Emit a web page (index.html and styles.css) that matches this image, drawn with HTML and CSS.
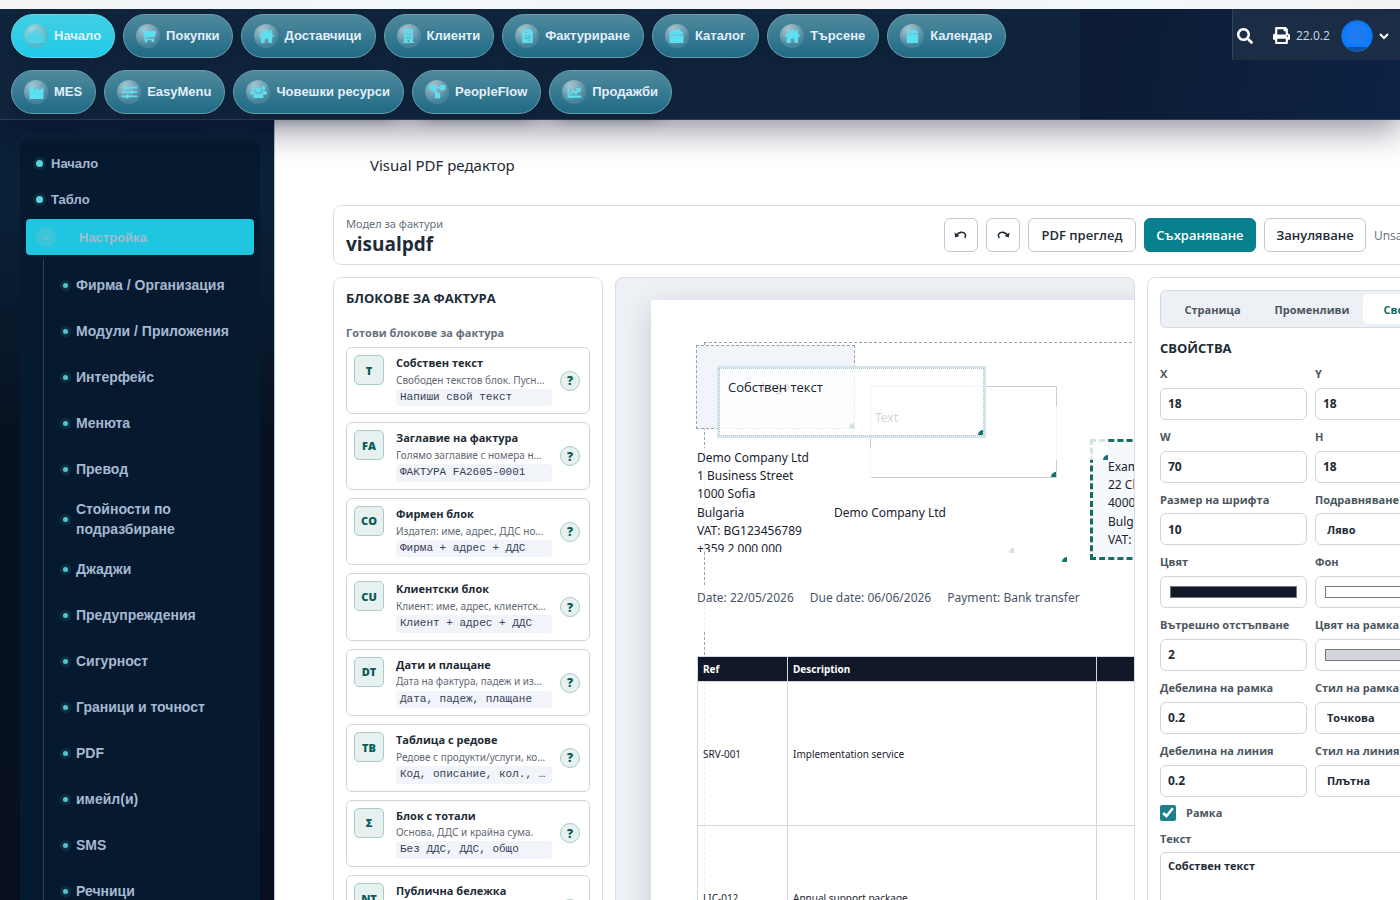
FILE: index.html
```html
<!DOCTYPE html>
<html lang="bg">
<head>
<meta charset="utf-8">
<title>Visual PDF редактор</title>
<link rel="stylesheet" href="styles.css">
</head>
<body>
<svg class="sprite" aria-hidden="true">
  <symbol id="i-city" viewBox="0 0 20 16"><path fill-rule="evenodd" d="M0 5h2V3h1v2h3V1h7v6h6v9H0zM2 7v1h1V7zm0 3v1h1v-1zm0 3v1h1v-1zm3-6v1h1V7zm0 3v1h1v-1zm0 3v1h1v-1zm4-10v1h2V3zm0 3v1h2V6zm0 3v1h2V9zm0 3v1h2v-1zm6-3v1h1V9zm0 3v1h1v-1z"/></symbol>
  <symbol id="i-cart" viewBox="0 0 18 16"><path d="M0 0h3.500L4 2h14l-1.700 7.500H6l.3 1.500h9.600l-.4 1.600a1.700 1.700 0 1 1-2.700 0H7.600a1.700 1.700 0 1 1-2.800-.1L2.300 1.500H0z"/></symbol>
  <symbol id="i-home" viewBox="0 0 18 16"><path d="M9 0l4 3.500V1h2.200v4.400L18 8l-1 1.200-1.500-1.300V16H11v-5H7v5H2.500V7.900L1 9.200 0 8z"/></symbol>
  <symbol id="i-building" viewBox="0 0 16 16"><path fill-rule="evenodd" d="M3 0h10v14.500h1.500V16h-13v-1.500H3zM5.500 2v2h2V2zm3 0v2h2V2zm-3 3.500v2h2v-2zm3 0v2h2v-2zM5.500 9v2h2V9zm3 0v2h2V9zM7 12.500V15h2v-2.500z"/></symbol>
  <symbol id="i-invoice" viewBox="0 0 16 16"><path fill-rule="evenodd" d="M2 2h3V0h6l3 3v13H2zm3 2v1h3V4zm0 3v4h6V7zm1 1h4v2H6zm3 5v1h3v-1z"/></symbol>
  <symbol id="i-box" viewBox="0 0 16 16"><path d="M2 3l9-3 2.500 3H15l1 3.500H0L1 3zM0 7.500h16V16H0z"/></symbol>
  <symbol id="i-calendar" viewBox="0 0 16 16"><path d="M1.500 2.500H4V1h2v1.500L12 0l.5 2.500h2V5h-13zM1.500 6h13v10h-13z"/></symbol>
  <symbol id="i-factory" viewBox="0 0 16 16"><path d="M0 1h5v5l5-3v3l6-3v13H0z"/></symbol>
  <symbol id="i-sliders" viewBox="0 0 18 16"><path d="M0 2h3V1h3v1h12v2H6v1H3V4H0zm0 5h10V6h3v1h5v2h-5v1h-3V9H0zm0 5h5v-1h3v1h10v2H8v1H5v-1H0z"/></symbol>
  <symbol id="i-users" viewBox="0 0 20 16"><path d="M10 2.500a3 3 0 1 1 0 6 3 3 0 0 1 0-6zM4 1a2 2 0 1 1 0 4.500A2 2 0 0 1 4 1zm12 0a2 2 0 1 1 0 4.500A2 2 0 0 1 16 1zM0 10c0-2 1-3.500 3-3.500h2.500C6 8.500 6 9 7 9.500L4.500 11H0zm20 0c0-2-1-3.500-3-3.500h-2.500c-.5 2-.5 2.500-1.500 3l2.500 1.500H20zM4 15c0-4 1.500-5 4-5h4c2.500 0 4 1 4 5z"/></symbol>
  <symbol id="i-flow" viewBox="0 0 18 16"><path d="M0 0h6v2h6V0h6v6h-6V4H6.500l2.800 5H12v6H6V9.500L3.500 6H0z"/></symbol>
  <symbol id="i-chart" viewBox="0 0 16 16"><path d="M0 1h2v11h14v2.500H0zM3 9l3.500-4 2.500 2 2-2-1.500-1.500H15V9l-1.500-1.500L9.500 11l-3-2.500L4 11H3z"/></symbol>
</svg>

<div class="strip"></div>
<header class="header">
  <nav class="nav" aria-label="Модули">
    <a href="#" class="pill active"><span class="orb"><svg><use href="#i-city"/></svg></span>Начало</a>
    <a href="#" class="pill"><span class="orb"><svg><use href="#i-cart"/></svg></span>Покупки</a>
    <a href="#" class="pill"><span class="orb"><svg><use href="#i-home"/></svg></span>Доставчици</a>
    <a href="#" class="pill"><span class="orb"><svg><use href="#i-building"/></svg></span>Клиенти</a>
    <a href="#" class="pill"><span class="orb"><svg><use href="#i-invoice"/></svg></span>Фактуриране</a>
    <a href="#" class="pill"><span class="orb"><svg><use href="#i-box"/></svg></span>Каталог</a>
    <a href="#" class="pill"><span class="orb"><svg><use href="#i-home"/></svg></span>Търсене</a>
    <a href="#" class="pill"><span class="orb"><svg><use href="#i-calendar"/></svg></span>Календар</a>
    <a href="#" class="pill"><span class="orb"><svg><use href="#i-factory"/></svg></span>MES</a>
    <a href="#" class="pill"><span class="orb"><svg><use href="#i-sliders"/></svg></span>EasyMenu</a>
    <a href="#" class="pill"><span class="orb"><svg><use href="#i-users"/></svg></span>Човешки ресурси</a>
    <a href="#" class="pill"><span class="orb"><svg><use href="#i-flow"/></svg></span>PeopleFlow</a>
    <a href="#" class="pill"><span class="orb"><svg><use href="#i-chart"/></svg></span>Продажби</a>
  </nav>
  <div class="header-side">
    <div class="user">
      <button class="icon-btn" aria-label="Търсене"><svg width="16" height="16" viewBox="0 0 512 512" fill="currentColor"><path d="M505 442.700L405.300 343c-4.500-4.500-10.600-7-17-7H372c27.600-35.300 44-79.700 44-128C416 93.100 322.900 0 208 0S0 93.100 0 208s93.100 208 208 208c48.300 0 92.700-16.400 128-44v16.300c0 6.400 2.500 12.500 7 17l99.700 99.700c9.400 9.400 24.600 9.400 33.900 0l28.300-28.300c9.400-9.400 9.400-24.600.1-34zM208 336c-70.700 0-128-57.200-128-128 0-70.700 57.200-128 128-128 70.700 0 128 57.200 128 128 0 70.700-57.200 128-128 128z"/></svg></button>
      <button class="icon-btn print" aria-label="Печат"><svg width="17" height="17" viewBox="0 0 512 512" fill="currentColor"><path d="M448 192V77.300c0-8.500-3.400-16.600-9.400-22.600L393.400 9.400c-6-6-14.100-9.400-22.600-9.400H96C78.300 0 64 14.300 64 32v160c-35.300 0-64 28.700-64 64v112c0 8.800 7.200 16 16 16h48v96c0 17.700 14.300 32 32 32h320c17.700 0 32-14.300 32-32v-96h48c8.800 0 16-7.200 16-16V256c0-35.300-28.700-64-64-64zm-64 256H128v-96h256v96zm0-224H128V64h192v48c0 8.800 7.200 16 16 16h48v96zm48 72c-13.300 0-24-10.700-24-24s10.700-24 24-24 24 10.700 24 24-10.700 24-24 24z"/></svg></button>
      <span class="version">22.0.2</span>
      <button class="account" aria-label="Профил"><span class="avatar"></span><svg width="10" height="8" viewBox="0 0 10 8" fill="none" stroke="currentColor" stroke-width="2"><path d="M1 2l4 4 4-4"/></svg></button>
    </div>
  </div>
</header>

<div class="body">
  <aside class="sidebar">
    <nav class="menu" aria-label="Меню">
      <a href="#" class="top">Начало</a>
      <a href="#" class="top">Табло</a>
      <a href="#" class="current"><span class="toggle">–</span>Настройка</a>
      <div class="sub">
        <a href="#">Фирма / Организация</a>
        <a href="#">Модули / Приложения</a>
        <a href="#">Интерфейс</a>
        <a href="#">Менюта</a>
        <a href="#">Превод</a>
        <a href="#">Стойности по подразбиране</a>
        <a href="#">Джаджи</a>
        <a href="#">Предупреждения</a>
        <a href="#">Сигурност</a>
        <a href="#">Граници и точност</a>
        <a href="#">PDF</a>
        <a href="#">имейл(и)</a>
        <a href="#">SMS</a>
        <a href="#">Речници</a>
      </div>
    </nav>
  </aside>

  <main class="main">
    <h1>Visual PDF редактор</h1>
    <div class="editor">
      <section class="toolbar">
        <div class="model"><span>Модел за фактури</span><strong>visualpdf</strong></div>
        <div class="actions">
          <button class="btn square" aria-label="Назад"><svg width="16" height="12" viewBox="0 0 16 12"><path d="M3.500 6.500C5 3 11 2 12.500 5.500c.5 1.500 0 2.500-.8 3.500" fill="none" stroke="currentColor" stroke-width="1.600"/><path d="M1.500 3.500l.7 5 4.300-1.500z" fill="currentColor"/></svg></button>
          <button class="btn square" aria-label="Напред"><svg width="16" height="12" viewBox="0 0 16 12"><path d="M12.500 6.500C11 3 5 2 3.500 5.500c-.5 1.500 0 2.500.8 3.500" fill="none" stroke="currentColor" stroke-width="1.600"/><path d="M14.500 3.500l-.7 5L9.500 7z" fill="currentColor"/></svg></button>
          <button class="btn preview">PDF преглед</button>
          <button class="btn primary">Съхраняване</button>
          <button class="btn reset">Зануляване</button>
          <span class="status">Unsaved changes</span>
        </div>
      </section>

      <section class="panel blocks">
        <h2>БЛОКОВЕ ЗА ФАКТУРА</h2>
        <h3>Готови блокове за фактура</h3>
        <div class="cards">
          <article class="card"><span class="tag">T</span><div class="info"><b>Собствен текст</b><span>Свободен текстов блок. Пуснете го на страницата</span><code>Напиши свой текст</code></div><button class="help">?</button></article>
          <article class="card"><span class="tag">FA</span><div class="info"><b>Заглавие на фактура</b><span>Голямо заглавие с номера на фактурата</span><code>ФАКТУРА FA2605-0001</code></div><button class="help">?</button></article>
          <article class="card"><span class="tag">CO</span><div class="info"><b>Фирмен блок</b><span>Издател: име, адрес, ДДС номер и телефон</span><code>Фирма + адрес + ДДС</code></div><button class="help">?</button></article>
          <article class="card"><span class="tag">CU</span><div class="info"><b>Клиентски блок</b><span>Клиент: име, адрес, клиентски номер</span><code>Клиент + адрес + ДДС</code></div><button class="help">?</button></article>
          <article class="card"><span class="tag">DT</span><div class="info"><b>Дати и плащане</b><span>Дата на фактура, падеж и избрано плащане</span><code>Дата, падеж, плащане</code></div><button class="help">?</button></article>
          <article class="card"><span class="tag">TB</span><div class="info"><b>Таблица с редове</b><span>Редове с продукти/услуги, количества и цени</span><code>Код, описание, кол., цена</code></div><button class="help">?</button></article>
          <article class="card"><span class="tag">Σ</span><div class="info"><b>Блок с тотали</b><span>Основа, ДДС и крайна сума.</span><code>Без ДДС, ДДС, общо</code></div><button class="help">?</button></article>
          <article class="card"><span class="tag">NT</span><div class="info"><b>Публична бележка</b><span>Бележка към клиента.</span><code>Публична бележка</code></div><button class="help">?</button></article>
        </div>
      </section>

      <section class="stage">
        <div class="sheet">
          <div class="guide"></div>
          <div class="node logo">Logo<i></i></div>
          <div class="node textbox">Text<i></i></div>
          <div class="node customer">Example Client Ltd<br>22 Client Road<br>4000 Plovdiv<br>Bulgaria<br>VAT: BG987654321</div>
          <div class="node blank"><i></i></div>
          <div class="node company">Demo Company Ltd<br>1 Business Street<br>1000 Sofia<br>Bulgaria<br>VAT: BG123456789<br>+359 2 000 000</div>
          <div class="node name">Demo Company Ltd<i></i></div>
          <div class="node cover"><i></i></div>
          <div class="node own">Собствен текст<i></i></div>
          <div class="node dates"><span>Date: 22/05/2026</span><span>Due date: 06/06/2026</span><span>Payment: Bank transfer</span></div>
          <table class="node lines">
            <thead><tr><th class="c-ref">Ref</th><th class="c-desc">Description</th><th></th></tr></thead>
            <tbody>
              <tr><td>SRV-001</td><td>Implementation service</td><td></td></tr>
              <tr><td>LIC-012</td><td>Annual support package</td><td></td></tr>
            </tbody>
          </table>
        </div>
      </section>

      <section class="panel props">
        <div class="tabs"><button>Страница</button><button>Променливи</button><button class="on">Свойства</button></div>
        <h2>СВОЙСТВА</h2>
        <form class="fields">
          <label>X<input type="text" value="18"></label>
          <label>Y<input type="text" value="18"></label>
          <label>W<input type="text" value="70"></label>
          <label>H<input type="text" value="18"></label>
          <label>Размер на шрифта<input type="text" value="10"></label>
          <label>Подравняване<select><option>Ляво</option></select></label>
          <label>Цвят<input type="color" value="#111827"></label>
          <label>Фон<input type="color" value="#ffffff"></label>
          <label>Вътрешно отстъпване<input type="text" value="2"></label>
          <label>Цвят на рамка<input type="color" value="#d1d5db"></label>
          <label>Дебелина на рамка<input type="text" value="0.2"></label>
          <label>Стил на рамка<select><option>Точкова</option></select></label>
          <label>Дебелина на линия<input type="text" value="0.2"></label>
          <label>Стил на линия<select><option>Плътна</option></select></label>
          <label class="check"><input type="checkbox" checked>Рамка</label>
          <label class="wide">Текст<textarea rows="5">Собствен текст</textarea></label>
        </form>
      </section>
    </div>
  </main>
</div>
</body>
</html>
```

FILE: styles.css
```css
* { box-sizing: border-box; }
body {
  margin: 0;
  height: 100vh;
  overflow: hidden;
  display: flex;
  flex-direction: column;
  font-family: "Open Sans", "Noto Sans", sans-serif;
  color: #212b36;
  background: #fff;
}
a { color: inherit; text-decoration: none; }
button, input, select, textarea { font: inherit; color: inherit; }
button { cursor: pointer; }
.sprite { display: none; }

/* Header */
.strip { position: relative; z-index: 3; flex: none; height: 9px; background: linear-gradient(90deg, #f3f4f4, #f1f8fc 30%, #f4f4f6 60%, #f1f8fc 80%, #f3f3f4); }
.header {
  position: relative;
  z-index: 2;
  flex: none;
  display: flex;
  background: #10253c;
  border-bottom: 1px solid #2a3d52;
  box-shadow: 0 10px 32px rgba(16, 14, 40, .45);
  font-family: "Liberation Sans", Arial, sans-serif;
}
.nav { flex: 1; display: flex; flex-wrap: wrap; gap: 12px 8px; padding: 5px 11px; }
.pill {
  display: flex;
  align-items: center;
  gap: 6px;
  height: 44px;
  padding: 0 13px 2px 12px;
  border: 1px solid #6b9fb0;
  border-radius: 22px;
  background: linear-gradient(#4f8a9d, #206a86);
  box-shadow: 0 6px 12px rgba(8, 20, 40, .3);
  color: #e2effa;
  font-size: 13px;
  font-weight: 700;
  white-space: nowrap;
}
.pill.active { background: linear-gradient(#42cfe4, #1fcbe8); border-color: #5cdcec; }
.orb {
  display: grid;
  place-items: center;
  width: 24px;
  height: 24px;
  margin-top: 2px;
  border-radius: 50%;
  background: radial-gradient(circle at 35% 25%, rgba(255, 255, 255, .55), rgba(255, 255, 255, .12) 65%);
}
.orb svg { width: 17px; height: 14px; fill: #5cdff0; }
.active .orb { background: radial-gradient(circle at 35% 25%, #a5d4de, #52b9cb 65%); }
.active .orb svg { fill: #4ad6e9; width: 19px; }
.header-side { flex: none; width: 320px; display: flex; justify-content: flex-end; align-items: flex-start; background: linear-gradient(100deg, #0c1b33, #0d2344); }
.user {
  display: flex;
  align-items: center;
  width: 168px;
  height: 51px;
  padding: 2px 0 0 4px;
  border-left: 1px solid #33445b;
  background: #1b2d45;
  color: #fff;
}
.icon-btn, .account { display: flex; align-items: center; padding: 0; border: 0; background: none; color: #fff; }
.print { margin-left: 20px; }
.version { margin: 0 11px 0 6px; font: 12px "Open Sans", sans-serif; color: #cdd8e6; }
.account { gap: 6px; }
.avatar { width: 32px; height: 32px; border: 1px solid #1c67b8; border-radius: 50%; background: linear-gradient(transparent 26px, #0f4fa8 26px), radial-gradient(circle at 50% 45%, #1d7bf2 10px, #0b7cff 11px); }

.body { flex: 1; display: flex; min-height: 0; }

/* Sidebar */
.sidebar {
  flex: none;
  width: 275px;
  padding: 21px 14px 0 20px;
  overflow: hidden;
  border-right: 1px solid #b8c2cf;
  background: linear-gradient(#0a2138, #0a2138 80px, #071120 320px, #08101f);
  font-family: "Liberation Sans", Arial, sans-serif;
  font-weight: 700;
  color: #a6b8d2;
}
.menu { padding: 4px 6px; border-radius: 6px; background: #051a2e; font-size: 14px; }
.menu a { display: flex; align-items: center; }
.menu .top { height: 36px; padding-left: 10px; gap: 8px; font-size: 13px; }
.top::before { content: ""; width: 7px; height: 7px; border-radius: 50%; background: #5cd3e0; box-shadow: 0 0 0 3px rgba(92, 211, 224, .1); }
.menu .current { height: 36px; margin-top: 2px; padding-left: 10px; gap: 23px; border-radius: 4px; background: #20c6e0; color: #a0bccf; font-size: 13px; }
.toggle { display: grid; place-items: center; width: 20px; height: 20px; border-radius: 50%; background: #3cc4d8; font-size: 8px; }
.sub { margin: 4px 0 0 17px; padding-top: 3px; border-left: 1px solid #2b4054; }
.sub a { min-height: 46px; padding: 7px 10px 7px 19px; gap: 8px; line-height: 20px; }
.sub a::before { content: ""; flex: none; width: 5px; height: 5px; border-radius: 50%; background: #55c3cf; box-shadow: 0 0 0 3px rgba(85, 195, 207, .12); }

/* Main */
.main { flex: 1; min-width: 0; overflow: hidden; padding: 34px 0 0 58px; }
h1 { margin: 0 0 28px 37px; font-family: "Noto Sans", sans-serif; font-size: 15px; font-weight: 400; line-height: 23px; }
.editor { display: grid; grid-template-columns: 270px minmax(520px, 1fr) 328px; gap: 12px; }
.toolbar { grid-column: 1 / -1; display: flex; justify-content: space-between; align-items: center; height: 60px; padding: 0 12px; border: 1px solid #dbdfe5; border-radius: 8px; }
.model { display: flex; flex-direction: column; padding-top: 2px; }
.model span { font: 11px/16px "Noto Sans", sans-serif; color: #66707c; }
.model strong { font-size: 19px; line-height: 24px; }
.actions { display: flex; align-items: center; gap: 8px; }
.btn { height: 34px; padding: 0; border: 1px solid #c3c8cf; border-radius: 6px; background: #fff; font-size: 13px; font-weight: 600; white-space: nowrap; }
.square { width: 34px; display: grid; place-items: center; }
.preview { width: 108px; }
.primary { width: 112px; background: #087f8c; border-color: #087f8c; color: #fff; }
.reset { width: 102px; }
.status { width: 88px; font-size: 12px; color: #5f6b78; white-space: nowrap; }

.panel { padding: 12px; border: 1px solid #dbdfe5; border-radius: 8px; background: #fff; }
h2 { margin: 0; font-size: 13px; font-weight: 700; line-height: 16px; }
h3 { margin: 18px 0 6px; font-size: 11px; font-weight: 700; line-height: 17px; color: #66707c; }
.cards { display: flex; flex-direction: column; gap: 8px; }
.card { display: flex; gap: 12px; padding: 7px; border: 1px solid #cfd5dd; border-radius: 6px; }
.tag { flex: none; display: grid; place-items: center; width: 30px; height: 30px; border: 1px solid #a9cbc8; border-radius: 5px; background: #e6f1f0; color: #0b5c58; font-size: 11px; font-weight: 800; }
.info { flex: 1; min-width: 0; display: flex; flex-direction: column; gap: 2px; }
.info b { font-size: 11px; line-height: 1.42; font-weight: 700; }
.info span, .info code { overflow: hidden; white-space: nowrap; text-overflow: ellipsis; }
.info span { padding-right: 5px; font: 10px/1.41 "Noto Sans", sans-serif; color: #5f6975; }
.info code { padding: 2px 4px; border-radius: 4px; background: #f1f4f9; font: 11px/1.25 "Liberation Mono", monospace; color: #334155; }
.help { flex: none; align-self: center; width: 20px; height: 20px; margin: 0 2px 0 -4px; padding: 0; border: 1px solid #a9cbc8; border-radius: 50%; background: #e6f1f0; color: #0b5c58; font-size: 12px; font-weight: 800; line-height: 17px; }

/* Canvas */
.stage { overflow: hidden; padding: 22px 0 0 35px; border: 1px solid #d8dde3; border-radius: 8px; background: #edf0f4; }
.sheet { position: relative; width: 794px; height: 1123px; background: #fff; box-shadow: 0 10px 28px rgba(30, 41, 80, .18); font-family: "Noto Sans", sans-serif; font-size: 12px; line-height: 1.52; color: #1a2230; }
.guide { position: absolute; inset: 42px 53px 53px; border: 1px dashed #93a5b5; }
.node { position: absolute; overflow: hidden; background: rgba(255, 255, 255, .82); }
.node i { position: absolute; right: 0; bottom: 0; width: 5px; height: 5px; background: #14746f; border-radius: 5px 0 0 0; }
.logo { left: 45px; top: 45px; width: 159px; height: 84px; display: grid; place-items: center; border: 1px dashed #93a5b5; background: #f1f5f9; color: #1a2230; }
.textbox { left: 219px; top: 86px; width: 187px; height: 92px; padding: 22px 4px; border: 1px solid #c9ced4; }
.customer { left: 439px; top: 139px; width: 280px; height: 121px; padding: 16px 15px; border: 3px dashed #146c62; background: #f5f9fb; }
.blank { left: 349px; top: 106px; width: 108px; height: 54px; }
.company { left: 45px; top: 148px; width: 175px; height: 104px; padding: 1px; }
.name { left: 183px; top: 194px; width: 180px; height: 59px; padding-top: 10px; }
.name i { opacity: .2; }
.cover { left: 380px; top: 180px; width: 36px; height: 82px; background: none; }
.own { left: 68px; top: 68px; width: 265px; height: 68px; padding: 9px 8px; border: 1px dotted #a9c6d0; outline: 2px solid #d5e4e8; font-family: "Open Sans", sans-serif; font-size: 13px; background: rgba(255, 255, 255, .8); }
.dates { left: 45px; top: 287px; width: 440px; height: 44px; padding: 2px 1px; display: flex; gap: 16px; color: #475569; white-space: nowrap; }
.lines { left: 46px; top: 356px; width: 700px; table-layout: fixed; border-collapse: collapse; font-size: 10px; line-height: 16px; }
.lines th { height: 25px; padding: 0 5px; border: 1px solid #d5d9df; background: #111827; color: #fff; text-align: left; }
.lines td { height: 144px; padding: 0 5px; border: 1px solid #d5d9df; }
.c-ref { width: 90px; }
.c-desc { width: 309px; }

/* Properties */
.tabs { display: grid; grid-template-columns: 97fr 102fr 95fr; padding: 3px; height: 38px; border: 1px solid #d5dbe2; border-radius: 6px; background: #edf0f4; }
.tabs button { padding: 0; border: 0; border-radius: 5px; background: none; font-size: 11px; font-weight: 700; color: #4b5661; }
.tabs .on { background: #fff; color: #0b6b66; }
.props h2 { margin: 12px 0 9px; }
.fields { display: grid; grid-template-columns: 1fr 1fr; gap: 8px; margin: 0; }
.fields label { display: flex; flex-direction: column; gap: 4px; font-size: 11px; line-height: 1.71; font-weight: 700; color: #4b5661; white-space: nowrap; }
.fields input, .fields select, .fields textarea { width: 100%; height: 32px; padding: 0 7px; border: 1px solid #cfd5dd; border-radius: 6px; background: #fff; color: #212b36; }
.fields input { font-size: 12px; }
.fields select { appearance: none; padding: 2px 11px 0; }
.fields input[type="color"] { padding: 9px; }
.fields ::-webkit-color-swatch-wrapper { padding: 0; }
.fields ::-webkit-color-swatch { border: 1px solid #767676; border-radius: 0; }
.fields .check { grid-column: 1 / -1; flex-direction: row; align-items: center; gap: 10px; height: 17px; }
.fields .check input { width: 16px; height: 16px; margin: 0; accent-color: #1b7f8c; }
.fields .wide { grid-column: 1 / -1; }
.fields textarea { height: 90px; padding: 4px 7px; resize: none; }
```
